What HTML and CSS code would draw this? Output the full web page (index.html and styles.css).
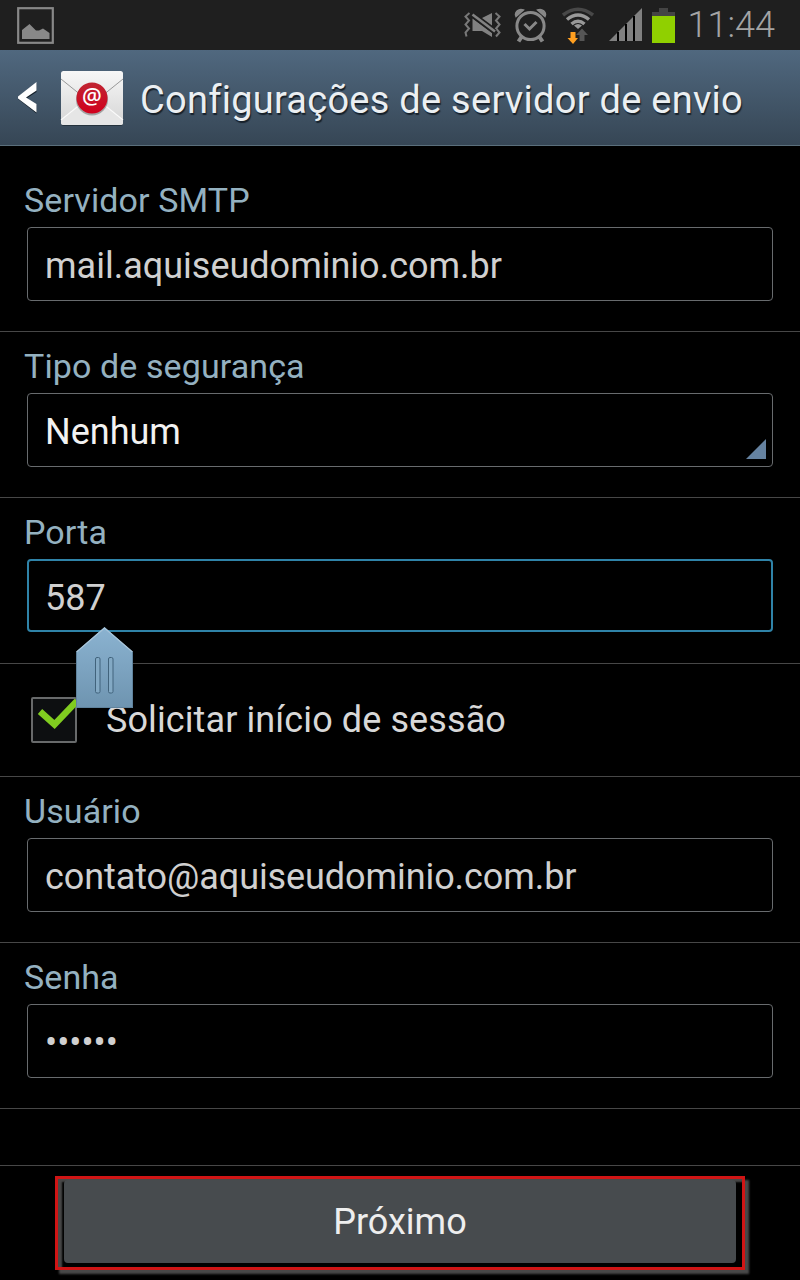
FILE: index.html
```html
<!DOCTYPE html>
<html lang="pt-BR">
<head>
    <meta charset="UTF-8">
    <meta name="viewport" content="width=device-width, initial-scale=1.0">
    <title>Configurações de servidor de envio</title>
    <link rel="stylesheet" href="styles.css">
</head>
<body>

    <div class="status-bar">
        <svg class="icon-picture" width="38" height="38" viewBox="0 0 38 38">
            <rect x="1.2" y="1.2" width="34.6" height="34.6" fill="none" stroke="#888" stroke-width="2.2"/>
            <path d="M5 32V23L12.500 17L19 23.500H22L26 21.500L32.500 26V32Z" fill="#888"/>
        </svg>
        <div class="status-icons">
            <!-- som desligado / vibrar -->
            <svg width="38" height="26" viewBox="0 0 38 26" fill="#828282">
                <path d="M5.500 1L1.500 4.500L5 8.500L1.500 12.500L5 16.500L1.500 20.500L2.500 24.500M31.500 1L35.500 4.500L32 8.500L35.500 12.500L32 16.500L35.500 20.500L32 24.500" fill="none" stroke="#787878" stroke-width="2"/>
                <path d="M8.500 6.500L28 21V25L18 19H8.500Z"/>
                <path d="M18 6L28 1V13.500Z"/>
                <path d="M8.500 3L31 20" stroke="#1f1f1f" stroke-width="5"/>
                <path d="M8.500 2.500L31 19.500" stroke="#828282" stroke-width="2.600"/>
            </svg>
            <!-- alarme -->
            <svg class="alarm" width="34" height="36" viewBox="0 0 34 36" fill="none" stroke="#888">
                <circle cx="16.500" cy="19" r="13.600" stroke-width="3"/>
                <path d="M2 9.500C0 5 5 1 9.500 3ZM31 9.500C33 5 28 1 23.500 3Z" fill="#888" stroke-width="1.500"/>
                <path d="M10.500 17L15.500 22L22.500 15" stroke-width="3"/>
                <path d="M7.500 30L4.500 34.500M25.500 30L28.500 34.500" stroke-width="4"/>
            </svg>
            <!-- wi-fi -->
            <svg class="wifi" width="32" height="37" viewBox="0 0 32 37">
                <path d="M1 8Q16 -3.500 31 8" fill="none" stroke="#484848" stroke-width="3.500"/>
                <path d="M5 12.500Q16 3.500 27 12.500M9.500 17Q16 11.500 22.500 17" fill="none" stroke="#999" stroke-width="3.500"/>
                <path d="M12 18.500Q16 15.500 20 18.500L16 22Z" fill="#999"/>
                <path d="M8.500 25H13.500V31H16L11 37L5.500 31H8.500Z" fill="#ff9f20"/>
                <path d="M17.500 34V28H14L20 21.500L26 28H22.500V34Z" fill="#555"/>
            </svg>
            <!-- sinal -->
            <svg class="signal" width="34" height="34" viewBox="0 0 34 34">
                <path d="M0 33L33 0V33Z" fill="#808080"/>
                <path d="M9 33V24M17 33V16M25 33V8" stroke="#000" stroke-width="2"/>
            </svg>
            <svg width="24" height="36" viewBox="0 0 24 36">
                <path d="M7 1H16V5H23V10H0V5H7Z" fill="#444"/>
                <rect x="0" y="9" width="23" height="27" fill="#90d000"/>
            </svg>
        </div>
        <span class="clock">11:44</span>
    </div>

    <header class="header">
        <svg class="back" width="20" height="33" viewBox="0 0 20 33">
            <path d="M18.500 1V10L8.500 16.500L18.500 22.500V31.500L0 17V15Z" fill="#15202a"/>
            <path d="M18.500 0V8.500L8 15.500L18.500 22V30.500L0 16.500V14.500Z" fill="#fff"/>
        </svg>
        <div class="app-icon">
            <svg width="64" height="56" viewBox="0 0 64 56">
                <defs>
                    <linearGradient id="paper" x1="0" y1="0" x2="0" y2="1">
                        <stop offset="0" stop-color="#f7f7f7"/>
                        <stop offset="1" stop-color="#d5d5d5"/>
                    </linearGradient>
                    <linearGradient id="seal" x1="0" y1="0" x2="0" y2="1">
                        <stop offset="0" stop-color="#c02532"/>
                        <stop offset="1" stop-color="#d1001c"/>
                    </linearGradient>
                </defs>
                <rect x="1" y="1" width="62" height="54" rx="3" fill="#25323d"/>
                <rect x="1" y="0" width="62" height="54" rx="2.500" fill="url(#paper)"/>
                <path d="M1 50L32 24L63 50V51.500Q63 54 60.500 54H3.500Q1 54 1 51.500Z" fill="#e6e6e6"/>
                <path d="M1 8L32 33L63 8" fill="none" stroke="#999" stroke-width="1"/>
                <path d="M1 49L32 24L63 49" fill="none" stroke="#fafafa" stroke-width="1.300"/>
                <circle cx="32" cy="28.500" r="16" fill="#777" opacity="0.6"/>
                <circle cx="32" cy="27" r="15.500" fill="url(#seal)"/>
                <text x="32" y="33" text-anchor="middle" class="at">@</text>
            </svg>
        </div>
        <h1>Configurações de servidor de envio</h1>
    </header>

    <form class="settings">
        <div class="row">
            <label for="smtp">Servidor SMTP</label>
            <input type="text" id="smtp" value="mail.aquiseudominio.com.br">
        </div>
        <div class="row">
            <label for="security">Tipo de segurança</label>
            <div class="select" id="security">Nenhum</div>
        </div>
        <div class="row">
            <label for="port">Porta</label>
            <div class="port-wrap">
                <input type="text" id="port" class="active" value="587">
                <svg class="handle" width="59" height="83" viewBox="0 0 59 83">
                    <defs>
                        <linearGradient id="grip" x1="0" y1="0" x2="0" y2="1">
                            <stop offset="0" stop-color="#8bb3d1"/>
                            <stop offset="1" stop-color="#6e94b0"/>
                        </linearGradient>
                    </defs>
                    <path d="M29.500 0L1 25V81H58V25Z" fill="url(#grip)"/>
                    <path d="M1.500 25L29.500 1L57.500 25" fill="none" stroke="#a9c5da" stroke-width="1.200"/>
                    <path d="M1.500 25V80.500H57.500V25" fill="none" stroke="#5f829c" stroke-width="1"/>
                    <rect x="20.500" y="30.500" width="4.500" height="35.500" rx="1.500" fill="#83a9c4" stroke="#41637c"/>
                    <rect x="33.500" y="30.500" width="4.500" height="35.500" rx="1.500" fill="#83a9c4" stroke="#41637c"/>
                </svg>
            </div>
        </div>
        <div class="row check-row">
            <svg class="check" width="48" height="48" viewBox="0 0 48 48">
                <rect x="1" y="2" width="44" height="44" rx="1" fill="#0d0f11" stroke="#686a6b" stroke-width="2"/>
                <path d="M9 15.500L23.500 28.500L46 5" fill="none" stroke="#80cc20" stroke-width="6.500"/>
            </svg>
            <span>Solicitar início de sessão</span>
        </div>
        <div class="row">
            <label for="user">Usuário</label>
            <input type="text" id="user" class="user" value="contato@aquiseudominio.com.br">
        </div>
        <div class="row">
            <label for="pass">Senha</label>
            <input type="password" id="pass" value="123456">
        </div>
    </form>

    <footer class="footer">
        <div class="highlight">
            <button type="button">Próximo</button>
        </div>
    </footer>

</body>
</html>
```
FILE: styles.css
```css
* {
    box-sizing: border-box;
}
body {
    margin: 0;
    width: 800px;
    height: 1280px;
    display: flex;
    flex-direction: column;
    overflow: hidden;
    background-color: #000;
    color: #d8d8d8;
    font-family: Roboto, sans-serif;
    font-size: 36px;
}
.status-bar {
    height: 50px;
    flex-shrink: 0;
    display: flex;
    align-items: center;
    padding: 0 25px 0 17px;
    background-color: #1f1f1f;
}
.icon-picture {
    margin-top: 1px;
}
.status-icons {
    display: flex;
    align-items: center;
    gap: 12px;
    margin-left: auto;
}
.alarm {
    margin-right: 2px;
}
.wifi {
    margin-right: 3px;
}
.signal {
    margin-right: -3px;
}
.clock {
    margin-left: 12px;
    font-size: 36px;
    font-weight: 300;
    color: #a4a4a4;
}
.header {
    height: 96px;
    flex-shrink: 0;
    display: flex;
    align-items: center;
    padding: 2px 0 0 18px;
    background: linear-gradient(#50687f, #364655);
    border-bottom: 1px solid #5b6f7c;
}
.back {
    margin-right: 22px;
}
.app-icon {
    height: 56px;
    margin-right: 16px;
}
.app-icon svg {
    display: block;
}
.at {
    font-family: "Noto Sans", sans-serif;
    font-size: 22px;
    font-weight: 500;
    fill: #fff;
}
h1 {
    margin: 3px 0 0;
    font-size: 38px;
    font-weight: 400;
    letter-spacing: 0.26px;
    white-space: nowrap;
    color: #ebeff2;
    text-shadow: 1px 2px 1px #17212b;
}
.settings {
    padding-top: 20px;
}
.row {
    height: 166px;
    padding: 0 27px;
    border-bottom: 1px solid #474747;
}
label {
    display: block;
    height: 61px;
    margin-left: -3px;
    padding-top: 14px;
    font-size: 34px;
    line-height: 40px;
    letter-spacing: 0.1px;
    color: #94b1c0;
}
input,
.select {
    display: block;
    width: 746px;
    height: 74px;
    padding: 3px 17px 0;
    border: 1px solid #686b6e;
    border-radius: 4px;
    outline: none;
    background-color: #000;
    color: #d0d0d0;
    font-family: inherit;
    font-size: 36px;
    line-height: 70px;
}
.user {
    letter-spacing: -0.08px;
}
.select {
    position: relative;
    color: #f2f2f2;
}
.select::after {
    content: "";
    position: absolute;
    right: 6px;
    bottom: 7px;
    width: 20px;
    height: 20px;
    background-color: #6582a0;
    clip-path: polygon(100% 0, 100% 100%, 0 100%);
}
.port-wrap {
    position: relative;
}
.active {
    height: 73px;
    padding: 4px 16px 0;
    border: 2px solid #2f83a8;
}
.handle {
    position: absolute;
    left: 48px;
    top: 67.5px;
}
.check-row {
    height: 113px;
    display: flex;
    align-items: center;
    gap: 27px;
    padding-left: 31px;
    letter-spacing: 0.1px;
}
.footer {
    margin-top: auto;
    height: 115px;
    padding: 10px 55px;
    border-top: 1px solid #474747;
}
.highlight {
    width: 690px;
    height: 94px;
    padding: 1px 6px 4px;
    border: 3px solid #d01515;
    box-shadow: 4px 4px 2px #484848, inset 4px 3px 2px #484848;
}
button {
    display: block;
    width: 672px;
    height: 83px;
    padding: 0;
    border: none;
    border-radius: 4px;
    background-color: #474b4e;
    color: #eee;
    font-family: inherit;
    font-size: 36px;
}
```
